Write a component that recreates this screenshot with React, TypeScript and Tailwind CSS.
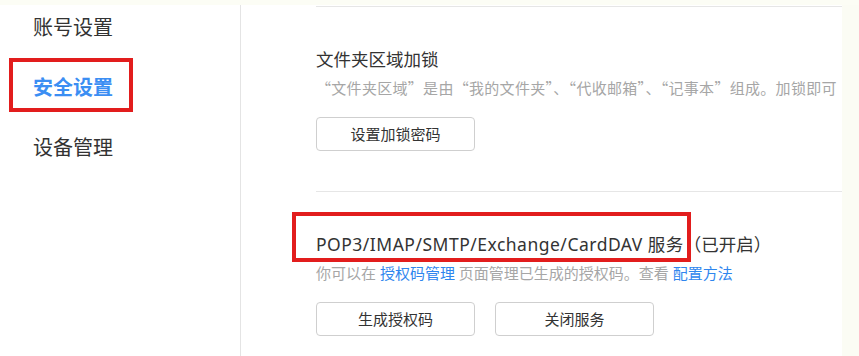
const cjk = "font-['Noto_Sans','Noto_Sans_CJK_SC',sans-serif]";

function NavItem({ label, active }: { label: string; active?: boolean }) {
  return (
    <div className="relative h-10 flex items-center pl-[33px]">
      {active && (
        <div className="absolute left-[9px] w-[124px] -top-[10px] -bottom-[4px] border-4 border-[#e21d1d]" />
      )}
      <span
        className={
          active
            ? "text-[20px] font-bold text-[#3b8ef3]"
            : "text-[20px] text-[#333]"
        }
      >
        {label}
      </span>
    </div>
  );
}

function Btn({ children }: { children: React.ReactNode }) {
  return (
    <button className="w-[159px] h-[34px] rounded-[4px] border border-[#cfcfcf] bg-white text-[15px] text-[#333] flex items-center justify-center">
      {children}
    </button>
  );
}

export default function App() {
  return (
    <div lang="zh-CN" className={`w-[859px] h-[356px] overflow-hidden bg-[#fbfcf4] ${cjk}`}>
      {/* 상단 여백 */}
      <div className="h-[5px] bg-[#fcfdf5]" />
      <div className="flex h-[351px]">
        {/* left nav */}
        <div className="w-[241px] bg-white border-r border-[#e4e4e4] pt-[3px] flex flex-col gap-5">
          <NavItem label="账号设置" />
          <NavItem label="安全设置" active />
          <NavItem label="设备管理" />
        </div>

        {/* content */}
        <div className="w-[601px] bg-white pl-[75px] overflow-hidden">
          <div className="h-px mt-px bg-[#e6e6e6]" />
          <section className="pt-[39px] pb-[40px] border-b border-[#e6e6e6]">
            <h3 className="text-[17.5px] leading-[26px] text-[#333]">文件夹区域加锁</h3>
            <p className="mt-[6px] text-[15px] leading-5 tracking-[0.3px] text-[#a6a6a6] whitespace-nowrap font-['Noto_Sans_CJK_SC',sans-serif]">
              “文件夹区域”是由“我的文件夹”、“代收邮箱”、“记事本”组成。加锁即可
            </p>
            <div className="mt-[19px] flex gap-5">
              <Btn>设置加锁密码</Btn>
            </div>
          </section>

          <section className="pt-[39px]">
            <h3 className="text-[17.5px] leading-[26px] text-[#333] whitespace-nowrap">
              <span className="relative inline-block tracking-[0.5px]">
                <span className="absolute -left-[24px] -right-[7px] -top-[19px] -bottom-[5px] border-4 border-[#e21d1d]" />
                POP3/IMAP/SMTP/Exchange/CardDAV 服务
              </span>
              <span className="font-['Noto_Sans_CJK_SC',sans-serif]">（已开启）</span>
            </h3>
            <p className="mt-[6px] text-[15px] leading-5 text-[#a6a6a6] whitespace-nowrap">
              你可以在 <span className="text-[#2f86ee]">授权码管理</span> 页面管理已生成的授权码。查看{" "}
              <span className="text-[#2f86ee]">配置方法</span>
            </p>
            <div className="mt-[19px] flex gap-5">
              <Btn>生成授权码</Btn>
              <Btn>关闭服务</Btn>
            </div>
          </section>
        </div>
      </div>
    </div>
  );
}
